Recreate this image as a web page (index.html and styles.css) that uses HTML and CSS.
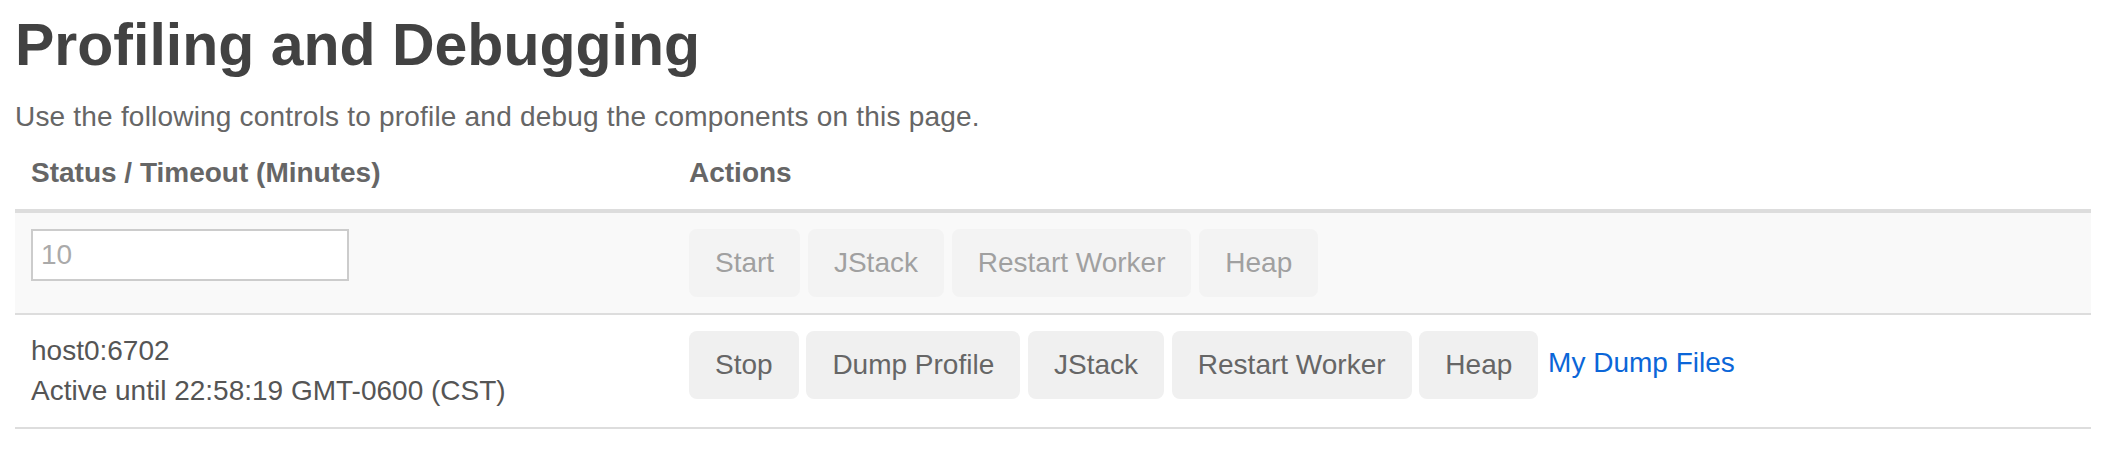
FILE: index.html
```html
<!DOCTYPE html>
<html>
<head>
<meta charset="utf-8">
<link rel="stylesheet" href="styles.css">
</head>
<body>
<h1 class="title">Profiling and Debugging</h1>
<p class="lead">Use the following controls to profile and debug the components on this page.</p>
<table class="prof">
  <thead>
    <tr><th class="col-status">Status / Timeout (Minutes)</th><th>Actions</th></tr>
  </thead>
  <tbody>
    <tr class="striped">
      <td><input class="timeout" type="text" placeholder="10"></td>
      <td><button class="btn" disabled>Start</button> <button class="btn" disabled>JStack</button> <button class="btn" disabled>Restart Worker</button> <button class="btn" disabled>Heap</button></td>
    </tr>
    <tr>
      <td>host0:6702<br>Active until 22:58:19 GMT-0600 (CST)</td>
      <td><button class="btn">Stop</button> <button class="btn">Dump Profile</button> <button class="btn">JStack</button> <button class="btn">Restart Worker</button> <button class="btn">Heap</button> <a class="dump" href="#">My Dump Files</a></td>
    </tr>
  </tbody>
</table>
</body>
</html>
```

FILE: styles.css
```css
html, body {
  margin: 0;
  padding: 0;
  background: #fff;
}
body {
  padding: 0 15px;
  font-family: "Liberation Sans", Arial, Helvetica, sans-serif;
  font-size: 28px;
  line-height: 40px;
  color: #555;
}
.title {
  margin: 12px 0 19px 0;
  font-size: 59px;
  line-height: 66px;
  font-weight: bold;
  color: #424242;
}
.lead {
  margin: 0;
  color: #666;
  letter-spacing: 0.2px;
}
.prof {
  width: 100%;
  border-collapse: collapse;
  border-spacing: 0;
}
.prof th {
  text-align: left;
  font-weight: bold;
  color: #666;
  padding: 16px;
  border-bottom: 4px solid #ddd;
  vertical-align: bottom;
}
.prof .col-status {
  width: 626px;
}
.prof td {
  padding: 16px;
  vertical-align: top;
  border-bottom: 2px solid #ddd;
  color: #555;
}
.prof tr.striped td {
  background: #f9f9f9;
}
.timeout {
  box-sizing: border-box;
  width: 318px;
  height: 52px;
  margin: 0;
  padding: 0 8px;
  border: 2px solid #ccc;
  background: #fff;
  font-family: inherit;
  font-size: 28px;
  color: #555;
  outline: none;
}
.timeout::placeholder {
  color: #aaa;
}
.btn {
  display: inline-block;
  margin: 0;
  padding: 12px 24px;
  border: 2px solid transparent;
  border-radius: 8px;
  background: #f0f0f0;
  font-family: inherit;
  font-size: 28px;
  line-height: 40px;
  color: #666;
  vertical-align: middle;
  cursor: pointer;
}
.btn:disabled {
  opacity: 0.6;
  cursor: default;
}
.dump {
  color: #0b66d8;
  text-decoration: none;
  margin-left: 2px;
}
```
